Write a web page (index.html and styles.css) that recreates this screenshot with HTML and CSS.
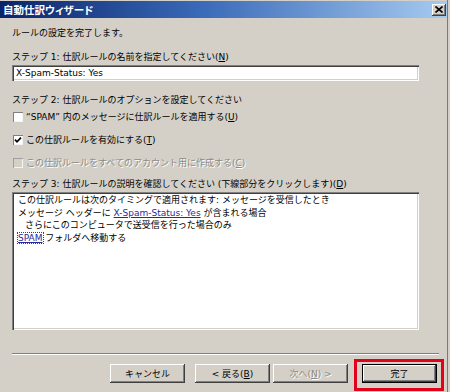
FILE: index.html
```html
<!DOCTYPE html>
<html lang="ja">
<head>
<meta charset="utf-8">
<title>自動仕訳ウィザード</title>
<link rel="stylesheet" href="styles.css">
</head>
<body>
<div class="window">
  <div class="titlebar">
    <span class="title">自動仕訳ウィザード</span>
    <span class="close"><svg width="8" height="7" viewBox="0 0 8 7"><path d="M0.5 0.5 L7.5 6.5 M7.5 0.5 L0.5 6.5" stroke="#000" stroke-width="1.6" fill="none"/></svg></span>
  </div>
  <div class="content">
    <p class="line intro">ルールの設定を完了します。</p>
    <p class="line step1">ステップ 1: 仕訳ルールの名前を指定してください(<u>N</u>)</p>
    <div class="input">X-Spam-Status: Yes</div>
    <p class="line step2">ステップ 2: 仕訳ルールのオプションを設定してください</p>
    <div class="check cb1"><span class="box"></span><span class="ctext">“SPAM” 内のメッセージに仕訳ルールを適用する(<u>U</u>)</span></div>
    <div class="check cb2"><span class="box"><svg width="8" height="8" viewBox="0 0 8 8"><polyline points="1,3.6 3,5.8 7,1.6" stroke="#000" stroke-width="1.7" fill="none"/></svg></span><span class="ctext">この仕訳ルールを有効にする(<u>T</u>)</span></div>
    <div class="check cb3 disabled"><span class="box"></span><span class="ctext">この仕訳ルールをすべてのアカウント用に作成する(<u>C</u>)</span></div>
    <p class="line step3">ステップ 3: 仕訳ルールの説明を確認してください (下線部分をクリックします)(<u>D</u>)</p>
    <div class="desc">
      <div class="dline">この仕訳ルールは次のタイミングで適用されます: メッセージを受信したとき</div>
      <div class="dline">メッセージ ヘッダーに <span class="link">X-Spam-Status: Yes</span> が含まれる場合</div>
      <div class="dline indent">さらにこのコンピュータで送受信を行った場合のみ</div>
      <div class="dline"><span class="link focus">SPAM</span> フォルダへ移動する</div>
    </div>
  </div>
  <div class="separator"></div>
  <div class="buttons">
    <div class="btn">キャンセル</div>
    <div class="btn back">&lt; 戻る(<u>B</u>)</div>
    <div class="btn next disabled">次へ(<u>N</u>) &gt;</div>
    <div class="btn finish default">完了</div>
  </div>
  <div class="highlight"></div>
</div>
</body>
</html>
```

FILE: styles.css
```css
* { box-sizing: border-box; }
html, body { margin: 0; padding: 0; }
body {
  background: #d4d0c8;
  font-family: "DejaVu Sans", "Noto Sans CJK JP", sans-serif;
  font-size: 9px;
  color: #000;
  width: 450px;
  height: 392px;
  overflow: hidden;
}
.window {
  position: relative;
  width: 448px;
  height: 392px;
  border-right: 1px solid #7a7a7a;
  padding-top: 1px;
  display: flex;
  flex-direction: column;
}
.titlebar {
  height: 17px;
  flex: none;
  background: linear-gradient(to right, #0a246a, #3a6ab8 45%, #a6caf0);
  display: flex;
  align-items: center;
  padding-left: 3px;
  padding-right: 1px;
}
.title {
  color: #fff;
  font-weight: bold;
  font-size: 10.5px;
  line-height: 17px;
  font-family: "Noto Sans CJK JP", sans-serif;
  font-feature-settings: "palt";
}
.close {
  margin-left: auto;
  width: 14px;
  height: 12px;
  background: #d4d0c8;
  box-shadow: inset -1px -1px #404040, inset 1px 1px #fff, inset -2px -2px #808080;
  display: flex;
  align-items: center;
  justify-content: center;
}
.content {
  padding-left: 12px;
  width: 419px;
}
.line {
  margin: 0;
  line-height: 12px;
  height: 12px;
  white-space: nowrap;
}
.intro { margin-top: 9px; }
.step1 { margin-top: 12px; }
.input {
  margin-top: 2px;
  height: 16px;
  background: #fff;
  box-shadow: inset 1px 1px #808080, inset 2px 2px #404040, inset -1px -1px #fff, inset -2px -2px #d4d0c8;
  padding-left: 4px;
  line-height: 16px;
  white-space: nowrap;
}
.step2 { margin-top: 13px; }
.check {
  display: flex;
  align-items: center;
  height: 12px;
  white-space: nowrap;
}
.cb1 { margin-top: 5px; }
.cb2 { margin-top: 11px; }
.cb3 { margin-top: 11px; }
.box {
  width: 10px;
  height: 10px;
  margin-left: 1px;
  background: #fff;
  box-shadow: inset 1px 1px #808080, inset -1px -1px #f4f4f4;
  display: flex;
  align-items: center;
  justify-content: center;
  flex: none;
}
.ctext { margin-left: 3px; line-height: 12px; }
.disabled .box { background: #d4d0c8; box-shadow: inset 1px 1px #a0a0a0, inset -1px -1px #f4f4f4; }
.disabled .ctext, .btn.disabled {
  color: #8c8a84;
  text-shadow: 1px 1px 0 #fff;
}
.step3 { margin-top: 9px; }
.desc {
  margin-top: 2px;
  height: 138px;
  background: #fff;
  box-shadow: inset 1px 1px #808080, inset 2px 2px #404040, inset -1px -1px #fff, inset -2px -2px #d4d0c8;
  padding: 2px 4px 0 6px;
}
.dline {
  line-height: 12.5px;
  height: 12.5px;
  white-space: nowrap;
}
.indent { padding-left: 7px; }
.link {
  color: #2a2a9a;
  text-decoration: underline;
}
.focus {
  outline: 1px dotted #3a3a8a;
  outline-offset: 0;
}
.separator {
  margin-top: 23px;
  margin-left: 12px;
  width: 427px;
  height: 2px;
  border-top: 1px solid #808080;
  border-bottom: 1px solid #fff;
  flex: none;
}
.buttons {
  display: flex;
  justify-content: flex-end;
  padding-right: 10px;
  margin-top: 9px;
}
.btn {
  width: 75px;
  height: 19px;
  background: #d4d0c8;
  box-shadow: inset -1px -1px #404040, inset 1px 1px #fff, inset -2px -2px #808080;
  display: flex;
  align-items: center;
  justify-content: center;
  white-space: nowrap;
  flex: none;
}
.btn.back { margin-left: 10px; }
.btn.next { margin-left: 3px; }
.btn.finish { margin-left: 14px; }
.btn.default {
  box-shadow: inset 0 0 0 1px #000, inset -2px -2px #404040, inset 2px 2px #fff, inset -3px -3px #808080;
}
.highlight {
  position: absolute;
  left: 354px;
  top: 359px;
  width: 90px;
  height: 32px;
  border: 3px solid #e3001b;
}
```
